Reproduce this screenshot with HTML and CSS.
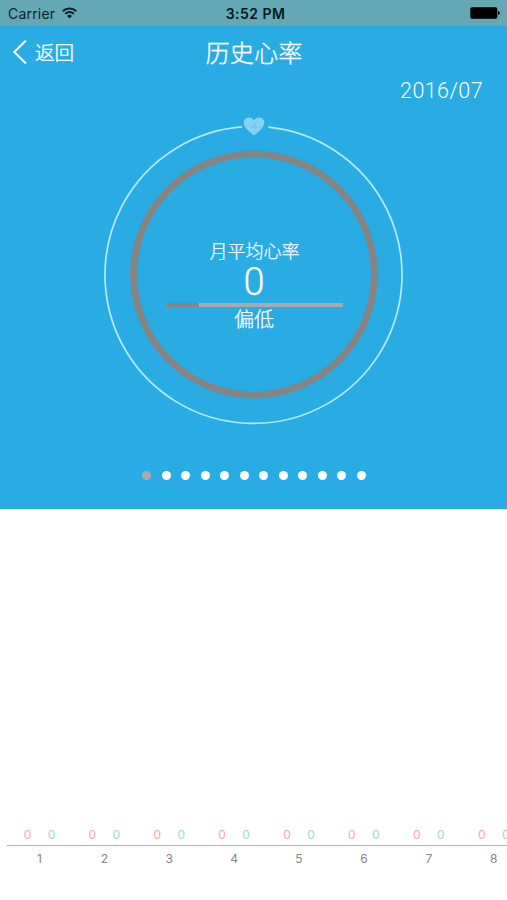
FILE: index.html
```html
<!DOCTYPE html>
<html lang="zh-CN">
<head>
<meta charset="utf-8">
<title>历史心率</title>
<link rel="stylesheet" href="styles.css">
</head>
<body>
<div class="screen">
  <section class="panel">
    <div class="status">
      <div class="carrier"><span>Carrier</span>
        <svg width="15" height="12" viewBox="0 0 15 12" fill="none" stroke="#10202a" stroke-width="2"><path d="M.8 4.3a9.5 9.5 0 0 1 13.4 0M3.2 6.9a6 6 0 0 1 8.600 0"/><path d="M7.5 11.6 4.9 9.1a3.7 3.7 0 0 1 5.2 0z" fill="#10202a" stroke="none"/></svg>
      </div>
      <div class="clock">3:52 PM</div>
      <div class="battery"><svg width="30" height="12" viewBox="0 0 30 12"><rect x=".3" y=".3" width="27" height="11.4" rx="1.6"/><path d="M28 4c2.4.4 2.4 3.6 0 4z"/></svg></div>
    </div>
    <header class="nav">
      <a class="back"><svg width="15" height="26" viewBox="0 0 15 26" fill="none" stroke="#fff" stroke-width="2"><path d="M14 1.500 2.300 13 14 24.500"/></svg><span>返回</span></a>
      <h1>历史心率</h1>
      <span></span>
    </header>
    <div class="date">2016/07</div>
    <div class="gauge">
      <svg class="rings" width="300" height="314" viewBox="0 0 300 314" fill="none">
        <path d="M164.4 13.2A148.5 148.5 0 1 1 138 12.900" stroke="#b5eafb" stroke-width="1.7"/>
        <circle cx="150" cy="160.5" r="120.4" stroke="#858585" stroke-width="7"/>
        <path d="M150 21.500C146 18 139.700 14 139.700 8.500c0-5.600 7.600-6.700 10.300-2.200 2.700-4.500 10.300-3.400 10.300 2.200 0 5.500-6.300 9.500-10.300 13z" fill="#86d2f2"/>
        <path d="M146 13h3l2-3v5l2-2" stroke="#6cc3ea" stroke-width="1"/>
      </svg>
      <div class="reading">
        <div class="label">月平均心率</div>
        <div class="value">0</div>
        <div class="bar"><div class="fill"></div></div>
        <div class="level">偏低</div>
      </div>
    </div>
    <div class="dots"><i class="on"></i><i></i><i></i><i></i><i></i><i></i><i></i><i></i><i></i><i></i><i></i><i></i></div>
  </section>
  <section class="chart">
    <div class="days">
      <div class="day"><div class="pair"><b>0</b><em>0</em></div><span>1</span></div>
      <div class="day"><div class="pair"><b>0</b><em>0</em></div><span>2</span></div>
      <div class="day"><div class="pair"><b>0</b><em>0</em></div><span>3</span></div>
      <div class="day"><div class="pair"><b>0</b><em>0</em></div><span>4</span></div>
      <div class="day"><div class="pair"><b>0</b><em>0</em></div><span>5</span></div>
      <div class="day"><div class="pair"><b>0</b><em>0</em></div><span>6</span></div>
      <div class="day"><div class="pair"><b>0</b><em>0</em></div><span>7</span></div>
      <div class="day"><div class="pair"><b>0</b><em>0</em></div><span>8</span></div>
    </div>
  </section>
</div>
</body>
</html>
```
FILE: styles.css
```css
* { box-sizing: border-box; }
body { margin: 0; background: #fff; font-family: Inter, "Noto Sans CJK SC", sans-serif; }
.screen { width: 507px; height: 900px; overflow: hidden; display: flex; flex-direction: column; }
.panel { height: 508.5px; background: #29abe4; color: #fff; display: flex; flex-direction: column; }
.status { height: 25.5px; background: #64a8b3; color: #10202a; display: grid; grid-template-columns: 1fr auto 1fr; align-items: center; padding: 1px 7px 0 8px; font-size: 14px; }
.carrier { display: flex; align-items: center; gap: 7px; letter-spacing: .2px; }
.clock { font-weight: 600; font-size: 14px; color: #07151b; letter-spacing: .45px; padding-left: 3px; }
.battery { display: flex; justify-content: flex-end; }
.nav { height: 53px; display: grid; grid-template-columns: 1fr auto 1fr; align-items: center; padding: 0 12px; }
.back { display: flex; align-items: center; gap: 8px; font: 300 19.500px/24px "Noto Sans CJK SC", sans-serif; -webkit-text-stroke: .4px #fff; }
.nav h1 { margin: 0; padding: 0 0 0 1px; font: 300 24.200px/30px "Noto Sans CJK SC", sans-serif; -webkit-text-stroke: .35px #fff; }
.date { height: 25px; padding-right: 24px; text-align: right; font: 300 21.500px/23px Roboto, sans-serif; letter-spacing: .4px; }
.gauge { position: relative; width: 300px; height: 314px; margin: 10.500px 0 0 104px; }
.rings { display: block; }
.reading { position: absolute; inset: 0; padding-top: 124px; display: flex; flex-direction: column; align-items: center; font-family: "Noto Sans CJK SC", sans-serif; font-weight: 300; -webkit-text-stroke: .25px #fff; }
.label { font-size: 18px; line-height: 24px; padding-left: 1px; }
.value { font: 300 38px/41px Roboto, sans-serif; }
.bar { width: 177px; height: 4px; background: #aaa; }
.fill { width: 33px; height: 4px; background: #858585; }
.level { font-size: 20px; line-height: 24px; }
.dots { display: flex; justify-content: center; gap: 10.550px; margin: 42.500px 0 0 1px; }
.dots i { width: 9px; height: 9px; border-radius: 50%; background: #fff; }
.dots .on { background: #aaa; }
.chart { flex: 1; padding: 317px 0 0 7px; overflow: hidden; }
.days { display: flex; width: 520px; }
.day { flex: 0 0 64.900px; text-align: center; color: #858585; font-size: 12px; }
.pair { height: 20px; display: flex; justify-content: center; gap: 16px; border-bottom: 1px solid #aeb8b8; line-height: 18px; }
.pair b, .pair em { width: 8px; font-style: normal; font-weight: 400; }
.pair b { color: #f7a9ab; }
.pair em { color: #9edac4; }
.day span { display: block; line-height: 26px; }
```
